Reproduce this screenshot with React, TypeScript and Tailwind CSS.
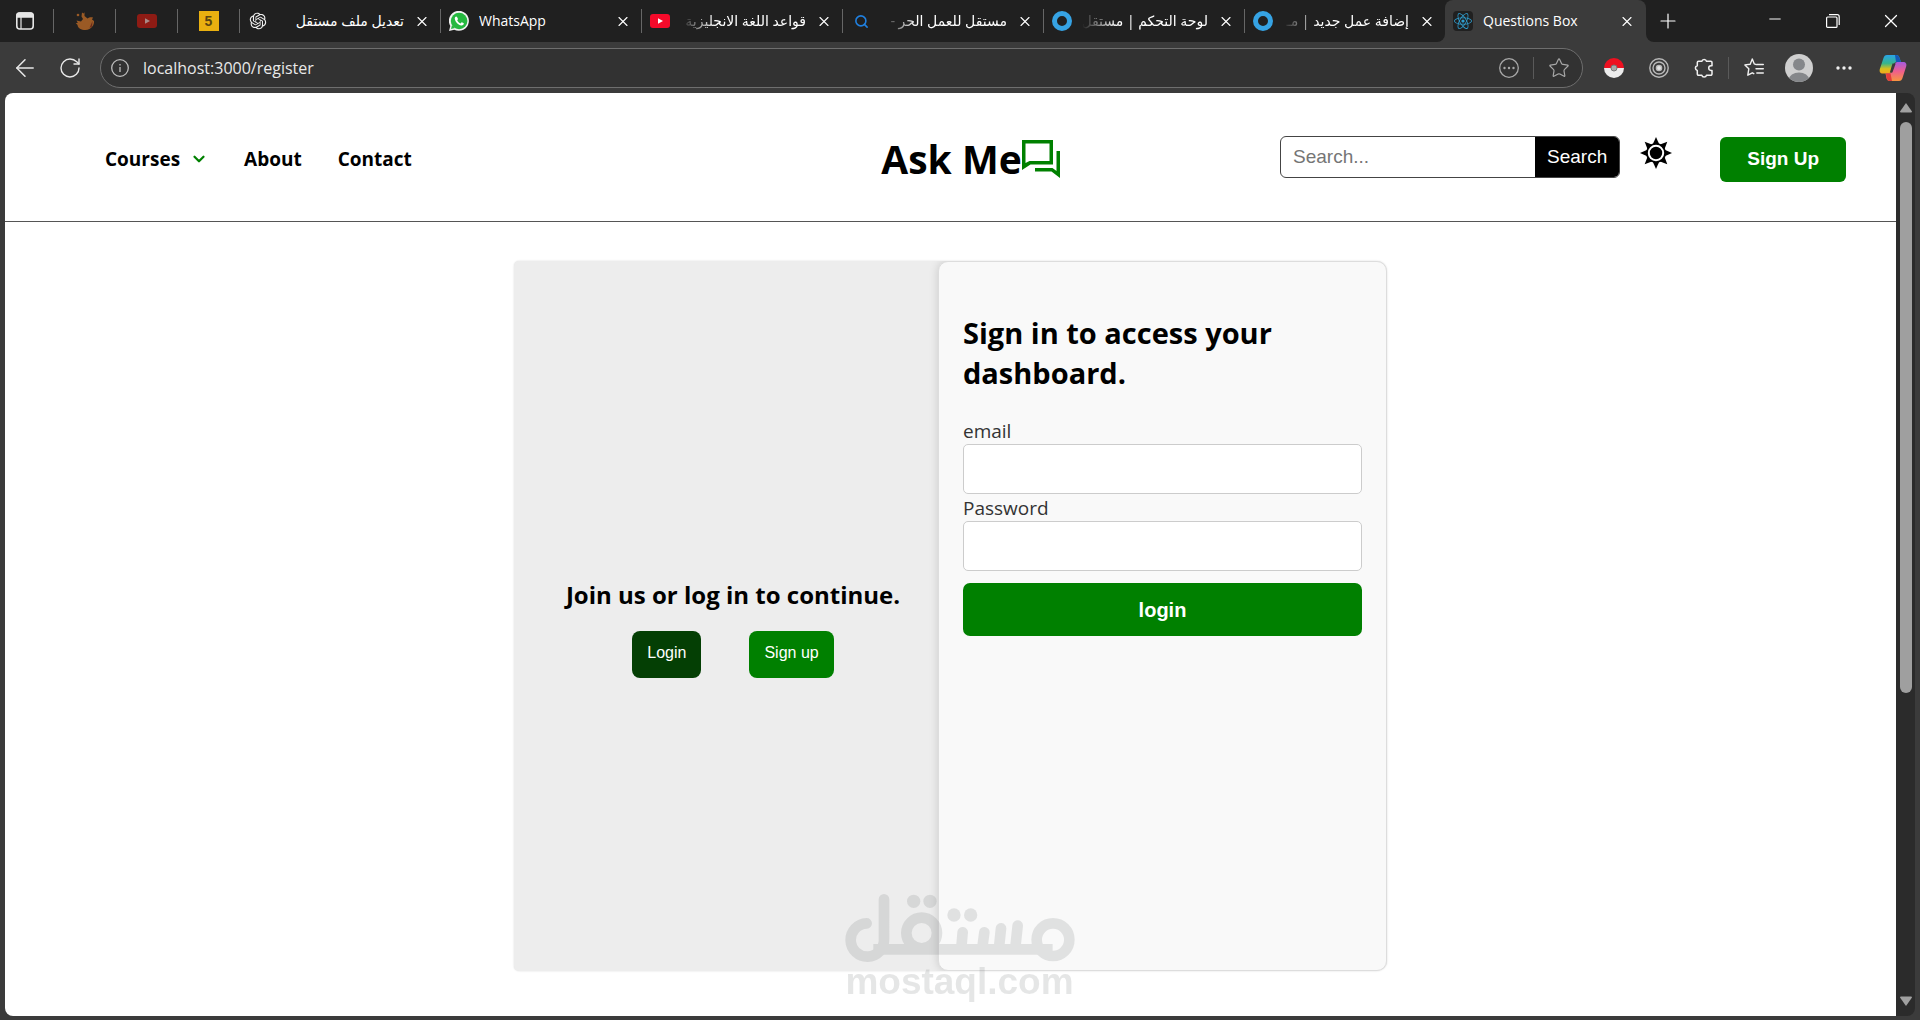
import React from "react";
import { ArrowLeft, ChevronDown, Minus, Plus, RotateCw, Search, Star, X } from "lucide-react";
import { FaReact } from "react-icons/fa";
import { RiOpenaiFill } from "react-icons/ri";

function WindowIcon() {
  return (
    <svg width="20" height="20" viewBox="0 0 20 20" fill="none" stroke="#e6e6e6" strokeWidth="1.6">
      <rect x="1.8" y="2" width="16.4" height="16" rx="3" />
      <path d="M2 6V4.5A2.5 2.5 0 0 1 4.5 2h11A2.5 2.5 0 0 1 18 4.500V6z" fill="#e6e6e6" />
      <path d="M6 6v12" strokeWidth="1.2" />
    </svg>
  );
}

function SquirrelIcon() {
  return (
    <svg width="20" height="20" viewBox="0 0 20 20" fill="#9a5a25">
      <path d="M7 1.500l1.500 1 1-1.200V5l3 2.500c1.500-1 3-1.500 5.500-1l-1 2 2 1.500c.5 4-2.500 8.500-8.500 9C6 19 3 17.500 2.500 14L.8 12h2L1.500 9.500 6 10.500 8 8 6.500 5.500z" />
      <circle cx="3" cy="4" r="1.300" />
      <path d="M17.500 10l-3 7 2.500-1.500z" fill="#6b2a1c" />
    </svg>
  );
}

function YoutubeIcon({ dim = false }: { dim?: boolean }) {
  return (
    <svg width="20" height="20" viewBox="0 0 20 20">
      <rect x="0" y="3" width="20" height="14" rx="3" fill={dim ? "#8e1b14" : "#f50a2a"} />
      <path d="M8 7.300v5.400l5-2.700z" fill={dim ? "#a98a86" : "#fff"} />
    </svg>
  );
}

function WhatsAppIcon() {
  return (
    <svg width="20" height="20" viewBox="0 0 20 20">
      <path d="M0 20l1.300-5A10 10 0 1 1 5.200 18.700z" fill="#f2f2f2" />
      <circle cx="10.100" cy="10" r="8.300" fill="#25b83f" />
      <path d="M2 18l1-4 3 3z" fill="#25b83f" />
      <path
        d="M7.300 5.400c-.9.200-1.700 1.200-1.500 2.500.5 3 3.500 6 6.500 6.500 1.500.2 2.500-.8 2.600-1.900 0-.3-2-1.400-2.300-1.200l-1 1.100c-1.500-.6-2.700-1.700-3.400-3.200l.8-1c.1-.4-.9-2.800-1.700-2.800z"
        fill="#fff"
      />
    </svg>
  );
}

function RingIcon() {
  return (
    <svg width="20" height="20" viewBox="0 0 20 20">
      <circle cx="10" cy="10" r="7.500" fill="none" stroke="#36a3e4" strokeWidth="5" />
    </svg>
  );
}

function ReactIcon() {
  return (
    <span className="flex size-5 items-center justify-center rounded-sm bg-[#202020]">
      <FaReact size={18} color="#2f9fd0" />
    </span>
  );
}

function FiveIcon() {
  return (
    <span className="flex size-5 items-center justify-center bg-[#e9b010] font-['Liberation_Sans'] text-sm font-bold text-[#5a4410]">
      5
    </span>
  );
}

function PokeballIcon() {
  return (
    <svg width="20" height="20" viewBox="0 0 20 20">
      <path d="M0 10a10 10 0 0 1 20 0z" fill="#ee1020" />
      <path d="M0 10a10 10 0 0 0 20 0z" fill="#ececec" />
      <circle cx="10" cy="10" r="3" fill="#a9a9a9" stroke="#777" />
    </svg>
  );
}

function TargetIcon() {
  return (
    <svg width="20" height="20" viewBox="0 0 20 20" fill="none" stroke="#b9b9b9" strokeWidth="1.400">
      <circle cx="10" cy="10" r="9.200" />
      <circle cx="10" cy="10" r="6" />
      <circle cx="10" cy="10" r="2.600" fill="#e4e4e4" />
    </svg>
  );
}

function PuzzleIcon() {
  return (
    <svg width="20" height="20" viewBox="0 0 20 20" fill="none" stroke="#f0f0f0" strokeWidth="1.500" strokeLinejoin="round">
      <path d="M4.500 3.300h3.300a2.400 2.400 0 0 1 4.700 0h4.300a1.200 1.200 0 0 1 1.200 1.200v3.300h-1a2.300 2.300 0 0 0 0 4.600h1v3.600a1.200 1.200 0 0 1-1.200 1.200h-4.300a2.400 2.400 0 0 1-4.700 0H4.500a1.200 1.200 0 0 1-1.200-1.200v-3.600a2.400 2.400 0 0 1 0-4.700V4.500a1.200 1.200 0 0 1 1.200-1.200z" />
    </svg>
  );
}

function FavoritesIcon() {
  return (
    <svg width="20" height="20" viewBox="0 0 20 20" fill="none" stroke="#f0f0f0" strokeWidth="1.400" strokeLinecap="round" strokeLinejoin="round">
      <path d="M12.300 6.600L10.200 5.800 8.300 1 6.200 6.200.9 6.900l3.900 3.900-1 6.400 4.500-2.400 1.500.9" />
      <path d="M12.800 6.500h6.500M12 10.700h7.300M12.800 15h6.500" />
    </svg>
  );
}

function AvatarIcon() {
  return (
    <svg width="28" height="28" viewBox="0 0 28 28">
      <defs>
        <clipPath id="avatar">
          <circle cx="14" cy="14" r="14" />
        </clipPath>
      </defs>
      <g clipPath="url(#avatar)">
        <rect width="28" height="28" fill="#cfcfcf" />
        <circle cx="14" cy="10.500" r="6" fill="#85878a" />
        <ellipse cx="14" cy="25.500" rx="10" ry="7" fill="#85878a" />
      </g>
    </svg>
  );
}

function CopilotIcon() {
  return (
    <svg width="28" height="28" viewBox="0 0 28 28">
      <defs>
        <linearGradient id="copilotLeft" x1="0" y1="0" x2="0" y2="1">
          <stop offset="0" stopColor="#2aa4e8" />
          <stop offset=".45" stopColor="#35b58e" />
          <stop offset=".75" stopColor="#d9c01c" />
          <stop offset="1" stopColor="#f2a51c" />
        </linearGradient>
        <linearGradient id="copilotRight" x1="0" y1="0" x2="0" y2="1">
          <stop offset="0" stopColor="#a45be0" />
          <stop offset=".5" stopColor="#ef5f8c" />
          <stop offset="1" stopColor="#f8953f" />
        </linearGradient>
      </defs>
      <path d="M8 1h9c2 0 3 1 3.500 3l1.500 4h-4c-2 0-3 1-3.500 3l-2 6c-.6 2-1.500 2.500-3 2.500H4c-3 0-4-2-3-5L4.500 4C5.200 2 6 1 8 1z" fill="url(#copilotLeft)" />
      <path d="M16 1h1c2 0 3 1 3.500 3l1.500 4h-5z" fill="#1458b8" />
      <path d="M20 27h-9c-2 0-3-1-3.500-3L6.500 19.500H10c2 0 3-1 3.500-3l2-6C16 9 17 8 18.500 8H24c3 0 4 2 3 5l-3.500 11c-.7 2-1.500 3-3.500 3z" fill="url(#copilotRight)" />
      <path d="M7 19.500h4.500L13 27h-2c-2 0-3-1-3.500-3z" fill="#e23b3b" />
      <path d="M13.500 9.500h3.200l-3.300 9h-2.600z" fill="#3b3b3b" />
    </svg>
  );
}

function ChatIcon() {
  return (
    <svg width="38" height="38" viewBox="0 0 38 38" fill="#008000">
      <path fillRule="evenodd" d="M0 0h31v24.500H8.500L0 30zM3.500 3.500v19.500L7.500 21h20V3.500z" />
      <path d="M34.500 11H38v27L29.500 31.500H13V28h17.500l4 3z" />
    </svg>
  );
}

function SunIcon() {
  const rays = [0, 45, 90, 135, 180, 225, 270, 315];
  return (
    <svg width="32" height="32" viewBox="0 0 32 32">
      {rays.map((angle) => (
        <path key={angle} d="M16 0l4 9h-8z" transform={`rotate(${angle} 16 16)`} />
      ))}
      <circle cx="16" cy="16" r="10" />
      <circle cx="16" cy="16" r="7.200" fill="none" stroke="#fff" strokeWidth="2" />
    </svg>
  );
}

function MostaqlMark() {
  return (
    <svg width="230" height="68" viewBox="75 72 690 204" fill="none" stroke="#64696a" strokeWidth="32" strokeLinecap="round">
      <path d="M140 160A50 50 0 1 0 192 209V88" />
      <path d="M160 238H698" strokeLinecap="butt" />
      <circle cx="305" cy="189" r="46" />
      <path d="M428 187l-4 46M493 187l-6 46M543 175l-6 58M593 167l-7 66" />
      <circle cx="699" cy="209" r="49" />
      <g fill="#64696a" stroke="none">
        <circle cx="281" cy="94" r="20" />
        <circle cx="330" cy="94" r="20" />
        <circle cx="402" cy="135" r="20" />
        <circle cx="452" cy="135" r="20" />
      </g>
    </svg>
  );
}

type Tab = { title: string; icon: React.ReactNode; rtl?: boolean; fade?: boolean };

const pinned = [
  { name: "Squirrel", icon: <SquirrelIcon /> },
  { name: "YouTube", icon: <YoutubeIcon dim /> },
  { name: "Five", icon: <FiveIcon /> },
];

const tabs: Tab[] = [
  { title: "تعديل ملف مستقل", icon: <RiOpenaiFill size={20} color="#f0f0f0" />, rtl: true },
  { title: "WhatsApp", icon: <WhatsAppIcon /> },
  { title: "قواعد اللغة الانجليزية", icon: <YoutubeIcon />, rtl: true, fade: true },
  { title: "مستقل للعمل الحر -", icon: <Search size={15} strokeWidth={2.500} color="#2080e0" />, rtl: true, fade: true },
  { title: "لوحة التحكم | مستقل", icon: <RingIcon />, rtl: true, fade: true },
  { title: "إضافة عمل جديد | مـ", icon: <RingIcon />, rtl: true, fade: true },
];

function TabBody({ title, icon, rtl, fade }: Tab) {
  return (
    <>
      <span className="flex w-5 shrink-0 justify-center">{icon}</span>
      <span
        dir={rtl ? "rtl" : "ltr"}
        className={
          "min-w-0 flex-1 overflow-hidden whitespace-nowrap " +
          (fade ? "[mask-image:linear-gradient(to_right,transparent,black_36px)]" : "")
        }
      >
        {title}
      </span>
      <button aria-label={`Close ${title}`} className="flex size-4 shrink-0 items-center justify-center">
        <X size={17} strokeWidth={1.700} />
      </button>
    </>
  );
}

function TabStrip() {
  return (
    <div className="flex h-[42px] bg-[#3b3b3b] font-['Open_Sans','DejaVu_Sans',sans-serif] text-sm text-white">
      <div className="flex min-w-0 items-center rounded-br-lg bg-[#202020]">
        <button aria-label="Tab actions" className="flex w-[53px] shrink-0 justify-center pr-1">
          <WindowIcon />
        </button>
        {pinned.map((p) => (
          <button key={p.name} aria-label={p.name} className="flex h-6 w-[62px] shrink-0 items-center justify-center border-l border-[#666]">
            {p.icon}
          </button>
        ))}
        {tabs.map((t) => (
          <div key={t.title} className="flex h-6 w-[201px] min-w-0 items-center gap-[10px] border-l border-[#666] pr-[10px] pl-2">
            <TabBody {...t} />
          </div>
        ))}
      </div>
      <div className="w-[201px] min-w-0 bg-[linear-gradient(#202020_50%,#3b3b3b_50%)]">
        <div className="flex h-full items-center gap-[10px] rounded-t-lg bg-[#3b3b3b] pr-[11px] pl-2">
          <TabBody title="Questions Box" icon={<ReactIcon />} />
        </div>
      </div>
      <div className="flex flex-1 items-center rounded-bl-lg bg-[#202020]">
        <button aria-label="New tab" className="flex w-11 justify-center">
          <Plus size={24} strokeWidth={1.2} />
        </button>
        <div className="ml-auto flex">
          <button aria-label="Minimize" className="flex w-[58px] justify-center">
            <Minus size={18} strokeWidth={1.3} />
          </button>
          <button aria-label="Restore" className="flex w-[58px] items-center justify-center">
            <svg width="14" height="14" viewBox="0 0 14 14" fill="none" stroke="#fff" strokeWidth="1.200">
              <rect x=".6" y="3" width="10.400" height="10.400" rx="1" />
              <path d="M3 .7h8.200a2 2 0 0 1 2 2V11" />
            </svg>
          </button>
          <button aria-label="Close window" className="flex w-[58px] justify-center">
            <X size={22} strokeWidth={1.3} />
          </button>
        </div>
      </div>
    </div>
  );
}

function ToolButton({ label, children }: { label: string; children: React.ReactNode }) {
  return (
    <button aria-label={label} className="flex w-[45px] shrink-0 items-center justify-center">
      {children}
    </button>
  );
}

function Toolbar() {
  return (
    <div className="flex h-[51px] items-center pr-[5px] pl-[2px] text-[#e8e8e8]">
      <ToolButton label="Back">
        <ArrowLeft size={28} strokeWidth={1.3} />
      </ToolButton>
      <ToolButton label="Reload">
        <RotateCw size={24} strokeWidth={1.4} />
      </ToolButton>
      <div className="ml-2 flex h-10 flex-1 items-center rounded-full border border-[#6e6e6e] bg-[#323232] pr-3 pl-[10px]">
        <svg width="18" height="18" viewBox="0 0 18 18" fill="none" stroke="#bdbdbd" strokeWidth="1.300">
          <circle cx="9" cy="9" r="8.300" />
          <path d="M9 8v5M9 5v1.500" />
        </svg>
        <input
          aria-label="Address"
          defaultValue="localhost:3000/register"
          className="ml-[14px] flex-1 bg-transparent font-['Open_Sans',sans-serif] text-base outline-none"
        />
        <button aria-label="Page actions">
          <svg width="20" height="20" viewBox="0 0 20 20" fill="none" stroke="#a8a8a8" strokeWidth="1.300">
            <circle cx="10" cy="10" r="9.300" />
            <g fill="#a8a8a8" stroke="none">
              <circle cx="5.500" cy="10" r="1.200" />
              <circle cx="10" cy="10" r="1.200" />
              <circle cx="14.500" cy="10" r="1.200" />
            </g>
          </svg>
        </button>
        <span className="mx-[14px] h-[22px] w-px bg-[#5a5a5a]" />
        <button aria-label="Add to favorites">
          <Star size={22} strokeWidth={1.300} color="#a8a8a8" />
        </button>
      </div>
      <div className="ml-2 flex items-center">
        <ToolButton label="Pokeball extension"><PokeballIcon /></ToolButton>
        <ToolButton label="Target extension"><TargetIcon /></ToolButton>
        <ToolButton label="Extensions"><PuzzleIcon /></ToolButton>
        <span className="mx-[2px] h-[22px] w-px bg-[#5a5a5a]" />
        <ToolButton label="Favorites"><FavoritesIcon /></ToolButton>
        <ToolButton label="Profile"><AvatarIcon /></ToolButton>
        <ToolButton label="Settings">
          <svg width="16" height="4" viewBox="0 0 16 4" fill="#f0f0f0">
            <circle cx="2" cy="2" r="1.700" />
            <circle cx="8" cy="2" r="1.700" />
            <circle cx="14" cy="2" r="1.700" />
          </svg>
        </ToolButton>
        <span className="w-1" />
        <ToolButton label="Copilot"><CopilotIcon /></ToolButton>
      </div>
    </div>
  );
}

function SiteHeader() {
  return (
    <header className="grid h-[129px] grid-cols-[1fr_auto_1fr] items-center border-b border-[#555] pt-1 pr-[50px] pl-[90px]">
      <nav className="ml-[10px] flex items-center gap-9 text-[19px] font-bold">
        <button className="flex items-center gap-[10px]">
          Courses
          <ChevronDown size={18} strokeWidth={3} color="#008000" />
        </button>
        <a href="#about">About</a>
        <a href="#contact">Contact</a>
      </nav>
      <a href="#home" className="flex items-center text-[39px] font-bold">
        Ask Me
        <ChatIcon />
      </a>
      <div className="flex items-center justify-end font-['Liberation_Sans',sans-serif] text-[19px]">
        <form className="mb-1 flex h-[42px] overflow-hidden rounded-md border border-[#444]" onSubmit={(e) => e.preventDefault()}>
          <input
            type="search"
            aria-label="Search"
            placeholder="Search..."
            className="w-[254px] px-3 outline-none placeholder:text-[#757575]"
          />
          <button className="bg-black px-3 text-white">Search</button>
        </form>
        <button aria-label="Toggle theme" className="mb-3 ml-5">
          <SunIcon />
        </button>
        <button className="ml-12 h-[45px] rounded-md bg-[#008000] px-[27px] font-bold text-white">Sign Up</button>
      </div>
    </header>
  );
}

function Field({ id, type, label }: { id: string; type: string; label: string }) {
  return (
    <div className="flex flex-col">
      <label htmlFor={id} className="pt-[2px] text-[19px] leading-[25px] font-medium text-[#333]">
        {label}
      </label>
      <input id={id} type={type} className="h-[50px] rounded-[5px] border border-[#ccc] bg-white px-3 text-lg" />
    </div>
  );
}

function Register() {
  return (
    <main className="flex flex-1 justify-center px-4 pt-[39px] pb-[45px]">
      <div className="flex w-full max-w-[873px] overflow-hidden rounded-l-[5px] rounded-r-[10px] bg-[#ededed] shadow-[0_0_2px_rgba(0,0,0,0.15)]">
        <section className="flex flex-1 flex-col items-center justify-center pt-6 pl-[14px]">
          <h2 className="text-2xl leading-8 font-bold">Join us or log in to continue.</h2>
          <div className="mt-5 flex gap-12 font-['Liberation_Sans',sans-serif] text-base text-white">
            <button className="h-[47px] rounded-lg bg-[#043f04] px-[15px] pb-[3px]">Login</button>
            <button className="h-[47px] rounded-lg bg-[#008000] px-[15px] pb-[3px]">Sign up</button>
          </div>
        </section>
        <section className="w-[449px] rounded-[10px] border border-[#ddd] bg-[#f9f9f9] px-6 pt-[51px] shadow-[0_0_10px_rgba(0,0,0,0.15)]">
          <h1 className="text-[29px] leading-10 font-bold">Sign in to access your dashboard.</h1>
          <form className="mt-6 flex flex-col" onSubmit={(e) => e.preventDefault()}>
            <Field id="email" type="email" label="email" />
            <Field id="password" type="password" label="Password" />
            <button className="mt-3 h-[53px] rounded-[7px] bg-[#008000] font-['Liberation_Sans',sans-serif] text-xl font-bold text-white">
              login
            </button>
          </form>
        </section>
      </div>
    </main>
  );
}

function Scrollbar() {
  return (
    <div aria-hidden="true" className="flex w-[19px] shrink-0 flex-col items-center rounded-r-lg bg-[#2b2b2b] py-[10px]">
      <svg width="12" height="10" viewBox="0 0 12 10" fill="#a0a0a0">
        <path d="M6 0l6 8.500q0 1-1 1H1q-1 0-1-1z" />
      </svg>
      <div className="my-[9px] flex-1">
        <div className="h-[66%] w-3 rounded-full bg-[#9f9f9f]" />
      </div>
      <svg width="12" height="10" viewBox="0 0 12 10" fill="#a0a0a0">
        <path d="M6 10L0 1.500q0-1 1-1h10q1 0 1 1z" />
      </svg>
    </div>
  );
}

export default function App() {
  return (
    <div className="flex min-h-screen flex-col bg-[#3b3b3b]">
      <TabStrip />
      <Toolbar />
      <div className="flex flex-1 pr-[5px] pb-1 pl-[5px]">
        <div className="relative flex min-w-0 flex-1 flex-col rounded-l-lg bg-white font-['Open_Sans',sans-serif] text-black">
          <SiteHeader />
          <Register />
          <div className="pointer-events-none absolute inset-x-0 bottom-[14px] flex flex-col items-center pl-[18px] opacity-[0.16]">
            <MostaqlMark />
            <span className="font-['Liberation_Sans',sans-serif] text-[37px] leading-[40px] font-bold text-[#64696a]">mostaql.com</span>
          </div>
        </div>
        <Scrollbar />
      </div>
    </div>
  );
}
